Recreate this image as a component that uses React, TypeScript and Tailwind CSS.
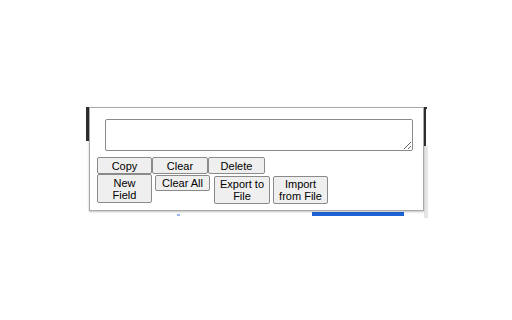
import React from "react";

function Btn({ className, children }: { className: string; children: React.ReactNode }) {
    return (
        <button
            className={
                "flex-none flex items-center justify-center text-center bg-[#efefef] border border-[#8a8a8a] rounded-[2px] text-[11px] leading-[12px] text-black px-[2px] " +
                className
            }
        >
            {children}
        </button>
    );
}

export default function App() {
    return (
        <div className="w-[512px] h-[320px] bg-white overflow-hidden" style={{ fontFamily: '"Liberation Sans", Arial, sans-serif' }}>
            <div className="pt-[105px] pl-[86px]">
                <div className="relative w-[342px]">
                    {/* page behind the popup */}
                    <div className="absolute left-[1px] top-0 w-[340px] h-[2px] bg-[#333333]"></div>
                    <div className="absolute left-0 top-0 w-[3px] h-[34px] bg-[#2e2e2e]"></div>
                    <div className="absolute left-[337px] top-0 w-[3px] h-[39px] bg-[#2e2e2e]"></div>
                    <div className="absolute left-[338px] top-[39px] w-[4px] h-[72px] bg-[#e6e6e6]"></div>
                    <div className="absolute left-[226px] top-[105px] w-[92px] h-[4px] bg-[#1d63d6]"></div>
                    <div className="absolute left-[91px] top-[107px] w-[3px] h-[2px] bg-[#9bbcf0]"></div>

                    {/* popup */}
                    <div className="relative ml-[3px] mt-[2px] w-[335px] h-[104px] bg-white border border-[#a8a8a8] shadow-[0_1px_2px_rgba(0,0,0,0.25)] pt-[11px] pl-[7px]">
                        <textarea className="block ml-[8px] w-[308px] h-[32px] border border-[#8a8a8a] rounded-[2px] bg-white resize" />
                        <div className="flex mt-[6px]">
                            <Btn className="w-[55px] h-[17px]">Copy</Btn>
                            <Btn className="w-[56px] h-[17px]">Clear</Btn>
                            <Btn className="w-[57px] h-[17px]">Delete</Btn>
                        </div>
                        <div className="flex items-start">
                            <Btn className="w-[55px] h-[29px]">New<br />Field</Btn>
                            <Btn className="w-[55px] h-[16px] ml-[3px] mt-[1px]">Clear All</Btn>
                            <Btn className="w-[56px] h-[28px] ml-[4px] mt-[2px]">Export to<br />File</Btn>
                            <Btn className="w-[55px] h-[28px] ml-[3px] mt-[2px]">Import<br />from File</Btn>
                        </div>
                    </div>
                </div>
            </div>
        </div>
    );
}
